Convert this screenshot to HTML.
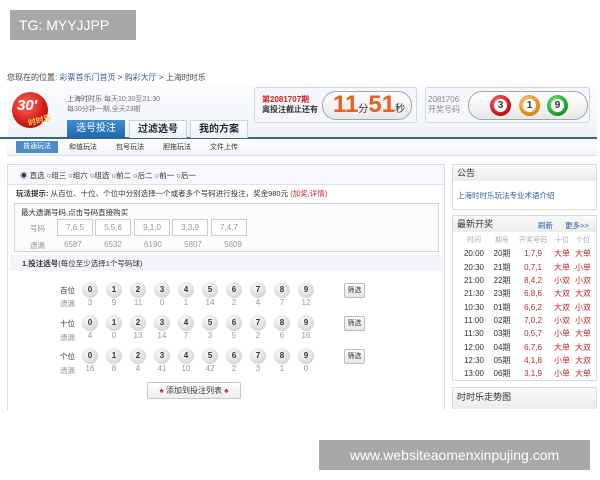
<!DOCTYPE html><html><head><meta charset="utf-8"><style>
*{margin:0;padding:0;box-sizing:border-box}
body{width:600px;height:480px;background:#fff;position:relative;overflow:hidden;font-family:"Liberation Sans","Noto Sans CJK SC",sans-serif;font-size:8px;color:#333}
.a{position:absolute;white-space:nowrap}
.ball{position:absolute;width:16px;height:16px;border-radius:50%;background:radial-gradient(circle at 40% 35%,#fcfcfc,#e0e0e0 55%,#c4c4c4);font-weight:bold;font-size:8px;text-align:center;line-height:16px;color:#333}
.yl{position:absolute;width:16px;text-align:center;font-size:8px;color:#999}
.sx{position:absolute;left:344px;width:21px;height:15px;border:1px solid #bbb;border-radius:2px;background:linear-gradient(#fff,#e6e6e6);font-size:7px;line-height:13px;text-align:center}
.r td{height:13.3px;line-height:13px;font-size:8px;padding:0}
.red{color:#c0282c}
</style></head><body>
<div class="a" style="left:10px;top:10px;width:126px;height:30px;background:#a8a8a8;color:#fff;font-size:14px;line-height:30px;padding-left:9px">TG: MYYJJPP</div>

<div class="a" style="left:7px;top:72px;font-size:8px;color:#444">您现在的位置: <span style="color:#3a5f9c">彩票首乐门首页</span> &gt; <span style="color:#3a5f9c">购彩大厅</span> &gt; 上海时时乐</div>

<div class="a" style="left:8px;top:86px;width:589px;height:52px;background:linear-gradient(#fbfcfe,#eef2f7)"></div>
<div class="a" style="left:0;top:137px;width:597px;height:2px;background:#3f6585"></div>
<div class="a" style="left:12px;top:92px;width:36px;height:36px;border-radius:50%;background:radial-gradient(circle at 40% 35%,#ff6a5a,#d01818 60%,#8e0c0c)"></div>
<div class="a" style="left:17px;top:97px;color:#fff;font-size:15px;font-style:italic;font-weight:bold">30'</div>
<div class="a" style="left:28px;top:115px;color:#ffd34a;font-size:8px;font-weight:bold;transform:rotate(-15deg)">时时乐</div>
<div class="a" style="left:67px;top:95px;color:#777;font-size:7px;line-height:10px"><span style="color:#555">上海时时乐</span> 每天10:30至21:30<br>每30分钟一期,全天23期</div>
<div class="a" style="left:67px;top:120px;width:58px;height:18px;background:linear-gradient(#3f8dd0,#1f66ad);color:#fff;font-size:10px;text-align:center;line-height:18px">选号投注</div>
<div class="a" style="left:129px;top:120px;width:58px;height:18px;background:linear-gradient(#fff,#eef1f5);border:1px solid #c8d0da;border-bottom:none;color:#223;font-size:10px;font-weight:bold;text-align:center;line-height:17px">过滤选号</div>
<div class="a" style="left:190px;top:120px;width:58px;height:18px;background:linear-gradient(#fff,#eef1f5);border:1px solid #c8d0da;border-bottom:none;color:#223;font-size:10px;font-weight:bold;text-align:center;line-height:17px">我的方案</div>

<div class="a" style="left:254px;top:87px;width:163px;height:36px;border:1px solid #d0d8e2;border-radius:3px;background:#f5f7fa"></div>
<div class="a" style="left:262px;top:95px;font-size:8px;line-height:10px;font-weight:bold"><span style="color:#d02020">第2081707期</span><br><span style="color:#333">离投注截止还有</span></div>
<div class="a" style="left:322px;top:91px;width:90px;height:29px;border:1px solid #9aa;border-radius:14px;background:linear-gradient(#fff,#e8e8e8)"></div>
<div class="a" style="left:333px;top:90px;color:#e8601c;font-weight:bold;font-size:24px;line-height:30px">11<span style="font-size:10px;color:#333;font-weight:normal">分</span>51<span style="font-size:10px;color:#333;font-weight:normal">秒</span></div>

<div class="a" style="left:425px;top:87px;width:165px;height:36px;border:1px solid #d0d8e2;border-radius:3px;background:#f5f7fa"></div>
<div class="a" style="left:428px;top:95px;color:#888;font-size:8px;line-height:10px">2081706<br>开奖号码</div>
<div class="a" style="left:468px;top:91px;width:120px;height:29px;border:1px solid #9aa;border-radius:14px;background:linear-gradient(#fff,#e8e8e8)"></div>
<div class="a" style="left:490px;top:95px;width:21px;height:21px;border-radius:50%;background:radial-gradient(circle at 40% 35%,#f77,#c81020 65%,#800);"><div style="margin:4px;width:13px;height:13px;border-radius:50%;background:#fff;text-align:center;font-weight:bold;font-size:10px;line-height:13px">3</div></div>
<div class="a" style="left:519px;top:95px;width:21px;height:21px;border-radius:50%;background:radial-gradient(circle at 40% 35%,#fc8,#e08a18 65%,#a05a00);"><div style="margin:4px;width:13px;height:13px;border-radius:50%;background:#fff;text-align:center;font-weight:bold;font-size:10px;line-height:13px">1</div></div>
<div class="a" style="left:547px;top:95px;width:21px;height:21px;border-radius:50%;background:radial-gradient(circle at 40% 35%,#8e8,#1e9a30 65%,#0a5a10);"><div style="margin:4px;width:13px;height:13px;border-radius:50%;background:#fff;text-align:center;font-weight:bold;font-size:10px;line-height:13px">9</div></div>

<div class="a" style="left:7px;top:139px;width:590px;height:17px;background:linear-gradient(#fff,#f0f3f7);border-bottom:1px solid #dde"></div>
<div class="a" style="left:16px;top:141px;width:42px;height:12px;background:#4c8cc8;color:#fff;font-size:7px;text-align:center;line-height:12px">普通玩法</div>
<div class="a" style="left:69px;top:142px;font-size:7px;color:#333">和值玩法</div>
<div class="a" style="left:116px;top:142px;font-size:7px">包号玩法</div>
<div class="a" style="left:163px;top:142px;font-size:7px">胆拖玩法</div>
<div class="a" style="left:210px;top:142px;font-size:7px">文件上传</div>

<div class="a" style="left:7px;top:164px;width:438px;height:246px;border:1px solid #d4dce6;border-bottom:none"></div>
<div class="a" style="left:8px;top:165px;width:436px;height:20px;background:#f6f8fb;border-bottom:1px solid #dde3ea"></div>
<div class="a" style="left:20px;top:170px;font-size:7.5px">◉ 直选 ○组三 ○组六 ○组选 ○前二 ○后二 ○前一 ○后一</div>
<div class="a" style="left:16px;top:188px;font-size:7.5px"><b>玩法提示:</b> 从百位、十位、个位中分别选择一个或者多个号码进行投注，奖金980元 <span class="red">(加奖,详情)</span></div>
<div class="a" style="left:14px;top:203px;width:425px;height:49px;border:1px solid #cfd8e0;background:#fbfcfd"></div>
<div class="a" style="left:21px;top:207px;font-size:7.5px">最大遗漏号码,点击号码直接购买</div>
<div class="a" style="left:30px;top:223px;font-size:7.5px;color:#999">号码</div>
<div class="a" style="left:30px;top:240px;font-size:7.5px;color:#999">遗漏</div>
<div class="a" style="left:57px;top:219px;width:36px;height:17px;border:1px solid #ccd;background:#fff;color:#999;text-align:center;line-height:15px">7,6,5</div>
<div class="a" style="left:95px;top:219px;width:36px;height:17px;border:1px solid #ccd;background:#fff;color:#999;text-align:center;line-height:15px">5,5,6</div>
<div class="a" style="left:134px;top:219px;width:36px;height:17px;border:1px solid #ccd;background:#fff;color:#999;text-align:center;line-height:15px">9,1,0</div>
<div class="a" style="left:172px;top:219px;width:36px;height:17px;border:1px solid #ccd;background:#fff;color:#999;text-align:center;line-height:15px">3,3,9</div>
<div class="a" style="left:211px;top:219px;width:36px;height:17px;border:1px solid #ccd;background:#fff;color:#999;text-align:center;line-height:15px">7,4,7</div>
<div class="a" style="left:64px;top:240px;color:#999;word-spacing:20px">6587 6532 6190 5807 5609</div>
<div class="a" style="left:10px;top:255px;width:434px;height:16px;background:#f3f5f8"></div>
<div class="a" style="left:22px;top:258px;font-size:7.5px"><b>1.投注选号</b>(每位至少选择1个号码球)</div>

<div class="a" style="left:60px;top:285px;font-size:7.5px">百位</div><div class="a" style="left:60px;top:298px;font-size:7.5px;color:#999">遗漏</div>
<div class="a" style="left:60px;top:318px;font-size:7.5px">十位</div><div class="a" style="left:60px;top:332px;font-size:7.5px;color:#999">遗漏</div>
<div class="a" style="left:60px;top:351px;font-size:7.5px">个位</div><div class="a" style="left:60px;top:365px;font-size:7.5px;color:#999">遗漏</div>
<div id="balls"></div>
<div class="sx" style="top:283px">筛选</div><div class="sx" style="top:316px">筛选</div><div class="sx" style="top:349px">筛选</div>
<div class="a" style="left:147px;top:382px;width:94px;height:17px;border:1px solid #c8c8c8;border-radius:2px;background:linear-gradient(#fff,#eee);font-size:8px;text-align:center;line-height:15px"><span class="red">♠</span> 添加到投注列表 <span class="red">♠</span></div>

<div class="a" style="left:452px;top:164px;width:145px;height:46px;border:1px solid #d8dde4"></div>
<div class="a" style="left:453px;top:165px;width:143px;height:16px;background:linear-gradient(#fafafa,#ececec);font-size:9px;line-height:16px;padding-left:4px">公告</div>
<div class="a" style="left:457px;top:190px;font-size:7.5px;color:#2c5aa0">上海时时乐玩法专业术语介绍</div>
<div class="a" style="left:452px;top:215px;width:145px;height:166px;border:1px solid #d8dde4"></div>
<div class="a" style="left:453px;top:216px;width:143px;height:16px;background:linear-gradient(#fafafa,#ececec);font-size:9px;line-height:16px;padding-left:4px">最新开奖</div>
<div class="a" style="left:538px;top:220px;font-size:7.5px;color:#2c5aa0">刷新</div>
<div class="a" style="left:565px;top:220px;font-size:7.5px;color:#2c5aa0">更多&gt;&gt;</div>
<table class="a r" style="left:458px;top:234px;border-collapse:collapse;text-align:center">
<tr style="color:#aaa"><td style="width:32px;font-size:7px">时间</td><td style="width:24px;font-size:7px">期号</td><td style="width:38px;font-size:7px">开奖号码</td><td style="width:20px;font-size:7px">十位</td><td style="width:22px;font-size:7px">个位</td></tr>
<tr><td>20:00</td><td>20期</td><td class="red">1,7,9</td><td class="red">大单</td><td class="red">大单</td></tr>
<tr><td>20:30</td><td>21期</td><td class="red">0,7,1</td><td class="red">大单</td><td class="red">小单</td></tr>
<tr><td>21:00</td><td>22期</td><td class="red">8,4,2</td><td class="red">小双</td><td class="red">小双</td></tr>
<tr><td>21:30</td><td>23期</td><td class="red">6,8,6</td><td class="red">大双</td><td class="red">大双</td></tr>
<tr><td>10:30</td><td>01期</td><td class="red">6,6,2</td><td class="red">大双</td><td class="red">小双</td></tr>
<tr><td>11:00</td><td>02期</td><td class="red">7,0,2</td><td class="red">小双</td><td class="red">小双</td></tr>
<tr><td>11:30</td><td>03期</td><td class="red">0,5,7</td><td class="red">小单</td><td class="red">大单</td></tr>
<tr><td>12:00</td><td>04期</td><td class="red">6,7,6</td><td class="red">大单</td><td class="red">大双</td></tr>
<tr><td>12:30</td><td>05期</td><td class="red">4,1,8</td><td class="red">小单</td><td class="red">大双</td></tr>
<tr><td>13:00</td><td>06期</td><td class="red">3,1,9</td><td class="red">小单</td><td class="red">大单</td></tr>
</table>
<div class="a" style="left:452px;top:387px;width:145px;height:22px;border:1px solid #d8dde4;border-bottom:none;background:linear-gradient(#fafafa,#ececec);font-size:9px;line-height:18px;padding-left:4px">时时乐走势图</div>

<div class="a" style="left:319px;top:440px;width:271px;height:30px;background:#a8a8a8;color:#fff;font-size:14px;line-height:30px;text-align:center">www.websiteaomenxinpujing.com</div>
<script>
var yl=[[3,9,11,0,1,14,2,4,7,12],[4,0,13,14,7,3,5,2,6,16],[16,8,4,41,10,42,2,3,1,0]],ys=[282,315,348],h='';
for(var r=0;r<3;r++)for(var i=0;i<10;i++){var x=82+i*24;h+='<div class="ball" style="left:'+x+'px;top:'+ys[r]+'px">'+i+'</div><div class="yl" style="left:'+x+'px;top:'+(ys[r]+16)+'px">'+yl[r][i]+'</div>';}
document.getElementById('balls').innerHTML=h;
</script>
</body></html>
